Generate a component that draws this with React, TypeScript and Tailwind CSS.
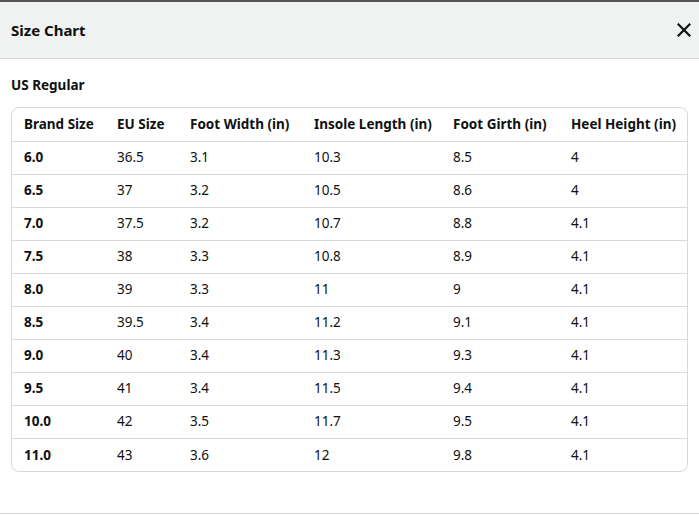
import React from 'react';

const headers = ['Brand Size', 'EU Size', 'Foot Width (in)', 'Insole Length (in)', 'Foot Girth (in)', 'Heel Height (in)'];

const rows = [
  ['6.0', '36.5', '3.1', '10.3', '8.5', '4'],
  ['6.5', '37', '3.2', '10.5', '8.6', '4'],
  ['7.0', '37.5', '3.2', '10.7', '8.8', '4.1'],
  ['7.5', '38', '3.3', '10.8', '8.9', '4.1'],
  ['8.0', '39', '3.3', '11', '9', '4.1'],
  ['8.5', '39.5', '3.4', '11.2', '9.1', '4.1'],
  ['9.0', '40', '3.4', '11.3', '9.3', '4.1'],
  ['9.5', '41', '3.4', '11.5', '9.4', '4.1'],
  ['10.0', '42', '3.5', '11.7', '9.5', '4.1'],
  ['11.0', '43', '3.6', '12', '9.8', '4.1'],
];

const widths = ['w-[93px]', 'w-[73px]', 'w-[124px]', 'w-[139px]', 'w-[118px]', ''];

const App = () => {
  return (
    <div className="w-[699px] h-[515px] bg-white text-[#0f1111] overflow-hidden flex flex-col" style={{ fontFamily: '"Noto Sans", Arial, sans-serif' }}>
      <div className="h-[2px] bg-[#555]" />
      <div className="h-[57px] bg-[#f0f2f2] border-b border-[#d5d9d9] flex items-center justify-between pl-[11px] pr-[8px]">
        <h2 className="text-[15px] font-bold">Size Chart</h2>
        <svg width="14" height="14" viewBox="0 0 14 14">
          <path d="M1.5 1.5 L12.5 12.5 M12.5 1.5 L1.5 12.5" stroke="#0f1111" strokeWidth="2.2" strokeLinecap="square" />
        </svg>
      </div>
      <div className="flex-1 px-[11px] pt-[16px]">
        <h3 className="text-[13.5px] font-bold leading-[20px] mb-[12px]">US Regular</h3>
        <div className="w-[677px] border border-[#d5d9d9] rounded-[8px] overflow-hidden">
          <table className="w-full border-collapse text-[13.5px]">
            <thead>
              <tr className="h-[33px]">
                {headers.map((h, i) => (
                  <th key={i} className={`${widths[i]} text-left font-bold pl-[12px] p-0`}>{h}</th>
                ))}
              </tr>
            </thead>
            <tbody>
              {rows.map((r, ri) => (
                <tr key={ri} className="h-[33px] border-t border-[#d5d9d9]">
                  {r.map((c, ci) => (
                    <td key={ci} className={`pl-[12px] p-0 ${ci === 0 ? 'font-bold' : ''}`}>{c}</td>
                  ))}
                </tr>
              ))}
            </tbody>
          </table>
        </div>
      </div>
      <div className="h-[2px] border-t border-[#d5d9d9]" />
    </div>
  );
};

export default App;
